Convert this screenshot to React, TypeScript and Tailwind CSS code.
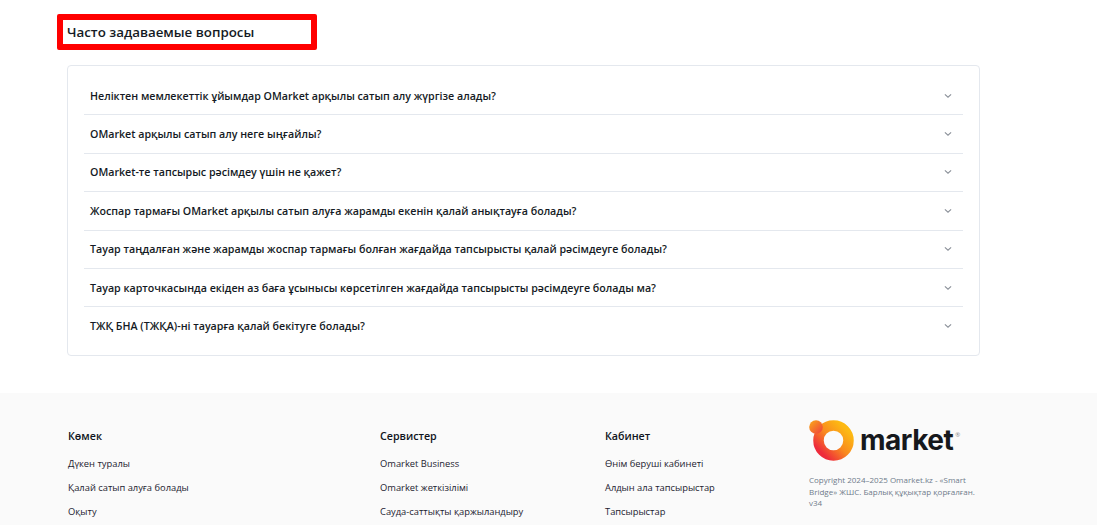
import React from "react";

const qs = [
  "Неліктен мемлекеттік ұйымдар OMarket арқылы сатып алу жүргізе алады?",
  "OMarket арқылы сатып алу неге ыңғайлы?",
  "OMarket-те тапсырыс рәсімдеу үшін не қажет?",
  "Жоспар тармағы OMarket арқылы сатып алуға жарамды екенін қалай анықтауға болады?",
  "Тауар таңдалған және жарамды жоспар тармағы болған жағдайда тапсырысты қалай рәсімдеуге болады?",
  "Тауар карточкасында екіден аз баға ұсынысы көрсетілген жағдайда тапсырысты рәсімдеуге болады ма?",
  "ТЖҚ БНА (ТЖҚА)-ні тауарға қалай бекітуге болады?",
];

function Chevron() {
  return (
    <svg width="8" height="6" viewBox="0 0 8 6" fill="none" className="shrink-0">
      <path d="M0.9 1.4 L4 4.2 L7.1 1.4" stroke="#8a8f98" strokeWidth="1.1" />
    </svg>
  );
}

function Col({ title, items, className }: { title: string; items: string[]; className: string }) {
  return (
    <div className={className}>
      <div className="text-[10.67px] leading-[16px] font-semibold text-[#0f1420]">{title}</div>
      <div className="mt-[12px] flex flex-col gap-[8px]">
        {items.map((t) => (
          <div key={t} className="text-[9.33px] leading-[16px] text-[#1c2230] whitespace-nowrap">{t}</div>
        ))}
      </div>
    </div>
  );
}

export default function App() {
  return (
    <div className="h-[525px] w-[1097px] overflow-hidden bg-white font-['Open_Sans',sans-serif]">
      <div className="pt-[14px] pl-[57px]">
        <div className="flex h-[36px] w-[260px] items-center rounded-[2px] border-[6px] border-[#ff0000] pl-[4px]">
          <h2 className="pt-[1px] text-[13.33px] font-semibold text-[#141a24] whitespace-nowrap">Часто задаваемые вопросы</h2>
        </div>
      </div>
      <div className="ml-[67px] mt-[15px] h-[291px] w-[913px] rounded-[4px] border border-[#e4e8ee] px-[16px] pt-[11px]">
        {qs.map((q, i) => (
          <div
            key={q}
            className={`flex h-[38.4px] items-center justify-between pl-[6px] pr-[11px] ${i < 6 ? "border-b border-[#e4e8ee]" : "pb-[1px]"}`}
          >
            <span className="text-[10.67px] font-semibold text-[#141a24] whitespace-nowrap">{q}</span>
            <Chevron />
          </div>
        ))}
      </div>
      <footer className="mt-[37px] flex h-[132px] bg-[#fafafa] pl-[68px] pt-[35px]">
        <Col className="w-[312px]" title="Көмек" items={["Дүкен туралы", "Қалай сатып алуға болады", "Оқыту"]} />
        <Col className="w-[225px]" title="Сервистер" items={["Omarket Business", "Omarket жеткізілімі", "Сауда-саттықты қаржыландыру"]} />
        <Col className="w-[204px]" title="Кабинет" items={["Өнім беруші кабинеті", "Алдын ала тапсырыстар", "Тапсырыстар"]} />
        <div className="w-[172px] -mt-[9px]">
          <div className="flex items-start">
            <svg width="46" height="42" viewBox="0 0 46 42" className="shrink-0">
              <defs>
                <linearGradient id="ring" x1="0.9" y1="0.1" x2="0.1" y2="0.9">
                  <stop offset="0" stopColor="#fdb913" />
                  <stop offset="0.5" stopColor="#f98a1f" />
                  <stop offset="1" stopColor="#ee2b3b" />
                </linearGradient>
                <linearGradient id="dot" x1="0.1" y1="0.1" x2="0.9" y2="0.9">
                  <stop offset="0" stopColor="#f9a11b" />
                  <stop offset="1" stopColor="#f0483a" />
                </linearGradient>
              </defs>
              <circle cx="24.5" cy="21.5" r="15" fill="none" stroke="url(#ring)" strokeWidth="10.5" />
              <circle cx="7" cy="8" r="6.8" fill="url(#dot)" />
            </svg>
            <span className="ml-[5px] mt-[7px] text-[28px] leading-[28px] font-bold tracking-[-0.5px] text-[#16181c] font-['Inter',sans-serif]">market</span>
            <span className="ml-[2px] mt-[12px] text-[6px] leading-[8px] text-[#888]">®</span>
          </div>
          <p className="mt-[13px] text-[8px] leading-[11.5px] text-[#6f7a8a]">
            Copyright 2024–2025 Omarket.kz - «Smart Bridge» ЖШС. Барлық құқықтар қорғалған. v34
          </p>
        </div>
      </footer>
    </div>
  );
}
